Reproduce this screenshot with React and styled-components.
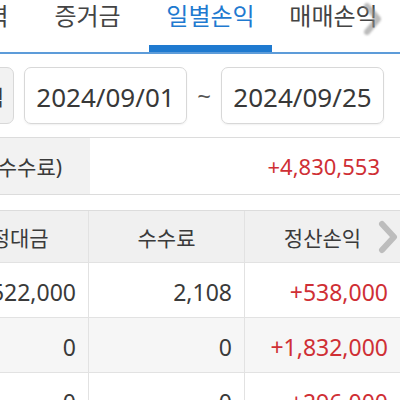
import styled, { createGlobalStyle } from "styled-components";

const GlobalStyle = createGlobalStyle`
  body {
    margin: 0;
    background: #fff;
    font-family: "Noto Sans", "Noto Sans CJK KR", sans-serif;
    color: #3a3a3a;
  }
`;

const Screen = styled.div`
  width: 400px;
  height: 400px;
  overflow: hidden;
  background: #fff;
`;

const TabBar = styled.div`
  position: relative;
  height: 52px;
  border-bottom: 2px solid #5d9cd9;
  overflow: hidden;
`;

const TabTrack = styled.div`
  display: flex;
  margin-left: -97px;
`;

const Tab = styled.div`
  flex: 0 0 123px;
  height: 52px;
  box-sizing: border-box;
  text-align: center;
  font-size: 24px;
  line-height: 32px;
  white-space: nowrap;
  color: ${(p) => (p.$active ? "#1f7ad0" : "#444")};
  border-bottom: 7px solid ${(p) => (p.$active ? "#1f7ad0" : "transparent")};
`;

const ScrollHint = styled.svg`
  position: absolute;
  right: ${(p) => p.$right}px;
  top: ${(p) => p.$top}px;
  opacity: ${(p) => p.$opacity};
  filter: ${(p) => (p.$blur ? "blur(0.8px)" : "none")};
`;

const DateRow = styled.div`
  display: flex;
  align-items: center;
  gap: 10px;
  height: 57px;
  margin: 13px 0 0 -60px;
`;

const PeriodButton = styled.div`
  flex: 0 0 74px;
  height: 57px;
  box-sizing: border-box;
  background: #f2f2f2;
  border: 1px solid #d8d8d8;
  border-radius: 7px;
  display: flex;
  align-items: center;
  justify-content: flex-end;
  padding-right: 9px;
  font-size: 21px;
  white-space: nowrap;
  overflow: hidden;
`;

const DateBox = styled.div`
  flex: 0 0 163px;
  height: 57px;
  box-sizing: border-box;
  border: 1px solid #d8d8d8;
  border-radius: 7px;
  box-shadow: 0 1px 2px rgba(0, 0, 0, 0.06);
  display: flex;
  align-items: center;
  justify-content: center;
  padding-top: 3px;
  font-size: 26px;
  color: #383838;
`;

const Tilde = styled.span`
  font-size: 24px;
  color: #555;
  width: 14px;
  text-align: center;
`;

const SummaryRow = styled.div`
  display: flex;
  height: 58px;
  box-sizing: border-box;
  margin-top: 13px;
  border-top: 1px solid #dcdcdc;
  border-bottom: 1px solid #dcdcdc;
`;

const SummaryLabel = styled.div`
  flex: 0 0 90px;
  box-sizing: border-box;
  background: #f2f2f2;
  display: flex;
  align-items: center;
  justify-content: flex-end;
  padding-right: 28px;
  font-size: 21px;
  white-space: nowrap;
  overflow: hidden;
`;

const SummaryValue = styled.div`
  flex: 1;
  display: flex;
  align-items: center;
  justify-content: flex-end;
  padding-right: 20px;
  font-size: 22px;
  color: #cf2f35;
`;

const Table = styled.div`
  margin: 15px 0 0 -68px;
`;

const Row = styled.div`
  position: relative;
  display: grid;
  grid-template-columns: 156px 156px 156px;
  height: ${(p) => (p.$head ? 53 : 55)}px;
  box-sizing: border-box;
  background: ${(p) => (p.$head ? "#f0f0f0" : p.$shade ? "#f6f6f6" : "#fff")};
  border-top: ${(p) => (p.$head ? "1px solid #dcdcdc" : "none")};
  border-bottom: 1px solid #e2e2e2;
`;

const Cell = styled.div`
  display: flex;
  align-items: center;
  justify-content: ${(p) => (p.$head ? "center" : "flex-end")};
  padding: ${(p) => (p.$head ? "0" : "4px 12px 0 0")};
  font-size: ${(p) => (p.$head ? 21 : 23)}px;
  color: ${(p) => (p.$red ? "#cf2f35" : "#3a3a3a")};
  white-space: nowrap;
  & + & {
    border-left: 1px solid #e2e2e2;
  }
`;

const Chevron = ({ right, top, w, h, color, width, opacity = 1, blur }) => (
  <ScrollHint
    $right={right}
    $top={top}
    $opacity={opacity}
    $blur={blur}
    width={w}
    height={h}
    viewBox={`0 0 ${w} ${h}`}
  >
    <polyline
      points={`${width / 2 + 1},${width / 2 + 1} ${w - width / 2 - 1},${h / 2} ${width / 2 + 1},${h - width / 2 - 1}`}
      fill="none"
      stroke={color}
      strokeWidth={width}
      strokeLinecap="round"
      strokeLinejoin="round"
    />
  </ScrollHint>
);

const tabs = ["거래이력", "증거금", "일별손익", "매매손익"];

const rows = [
  ["522,000", "2,108", "+538,000"],
  ["0", "0", "+1,832,000"],
  ["0", "0", "+296,000"],
];

export default function App() {
  return (
    <Screen>
      <GlobalStyle />
      <TabBar>
        <TabTrack>
          {tabs.map((t) => (
            <Tab key={t} $active={t === "일별손익"}>
              {t}
            </Tab>
          ))}
        </TabTrack>
        <Chevron right={18} top={2} w={19} h={34} color="#8f8f8f" width={6} opacity={0.6} blur />
      </TabBar>

      <DateRow>
        <PeriodButton>입력</PeriodButton>
        <DateBox>2024/09/01</DateBox>
        <Tilde>~</Tilde>
        <DateBox>2024/09/25</DateBox>
      </DateRow>

      <SummaryRow>
        <SummaryLabel>손익합계(수수료)</SummaryLabel>
        <SummaryValue>+4,830,553</SummaryValue>
      </SummaryRow>

      <Table>
        <Row $head>
          <Cell $head>약정대금</Cell>
          <Cell $head>수수료</Cell>
          <Cell $head>정산손익</Cell>
          <Chevron right={2} top={9} w={20} h={34} color="#bdbdbd" width={6} />
        </Row>
        {rows.map((r, i) => (
          <Row key={i} $shade={i % 2 === 1}>
            <Cell>{r[0]}</Cell>
            <Cell>{r[1]}</Cell>
            <Cell $red>{r[2]}</Cell>
          </Row>
        ))}
      </Table>
    </Screen>
  );
}
